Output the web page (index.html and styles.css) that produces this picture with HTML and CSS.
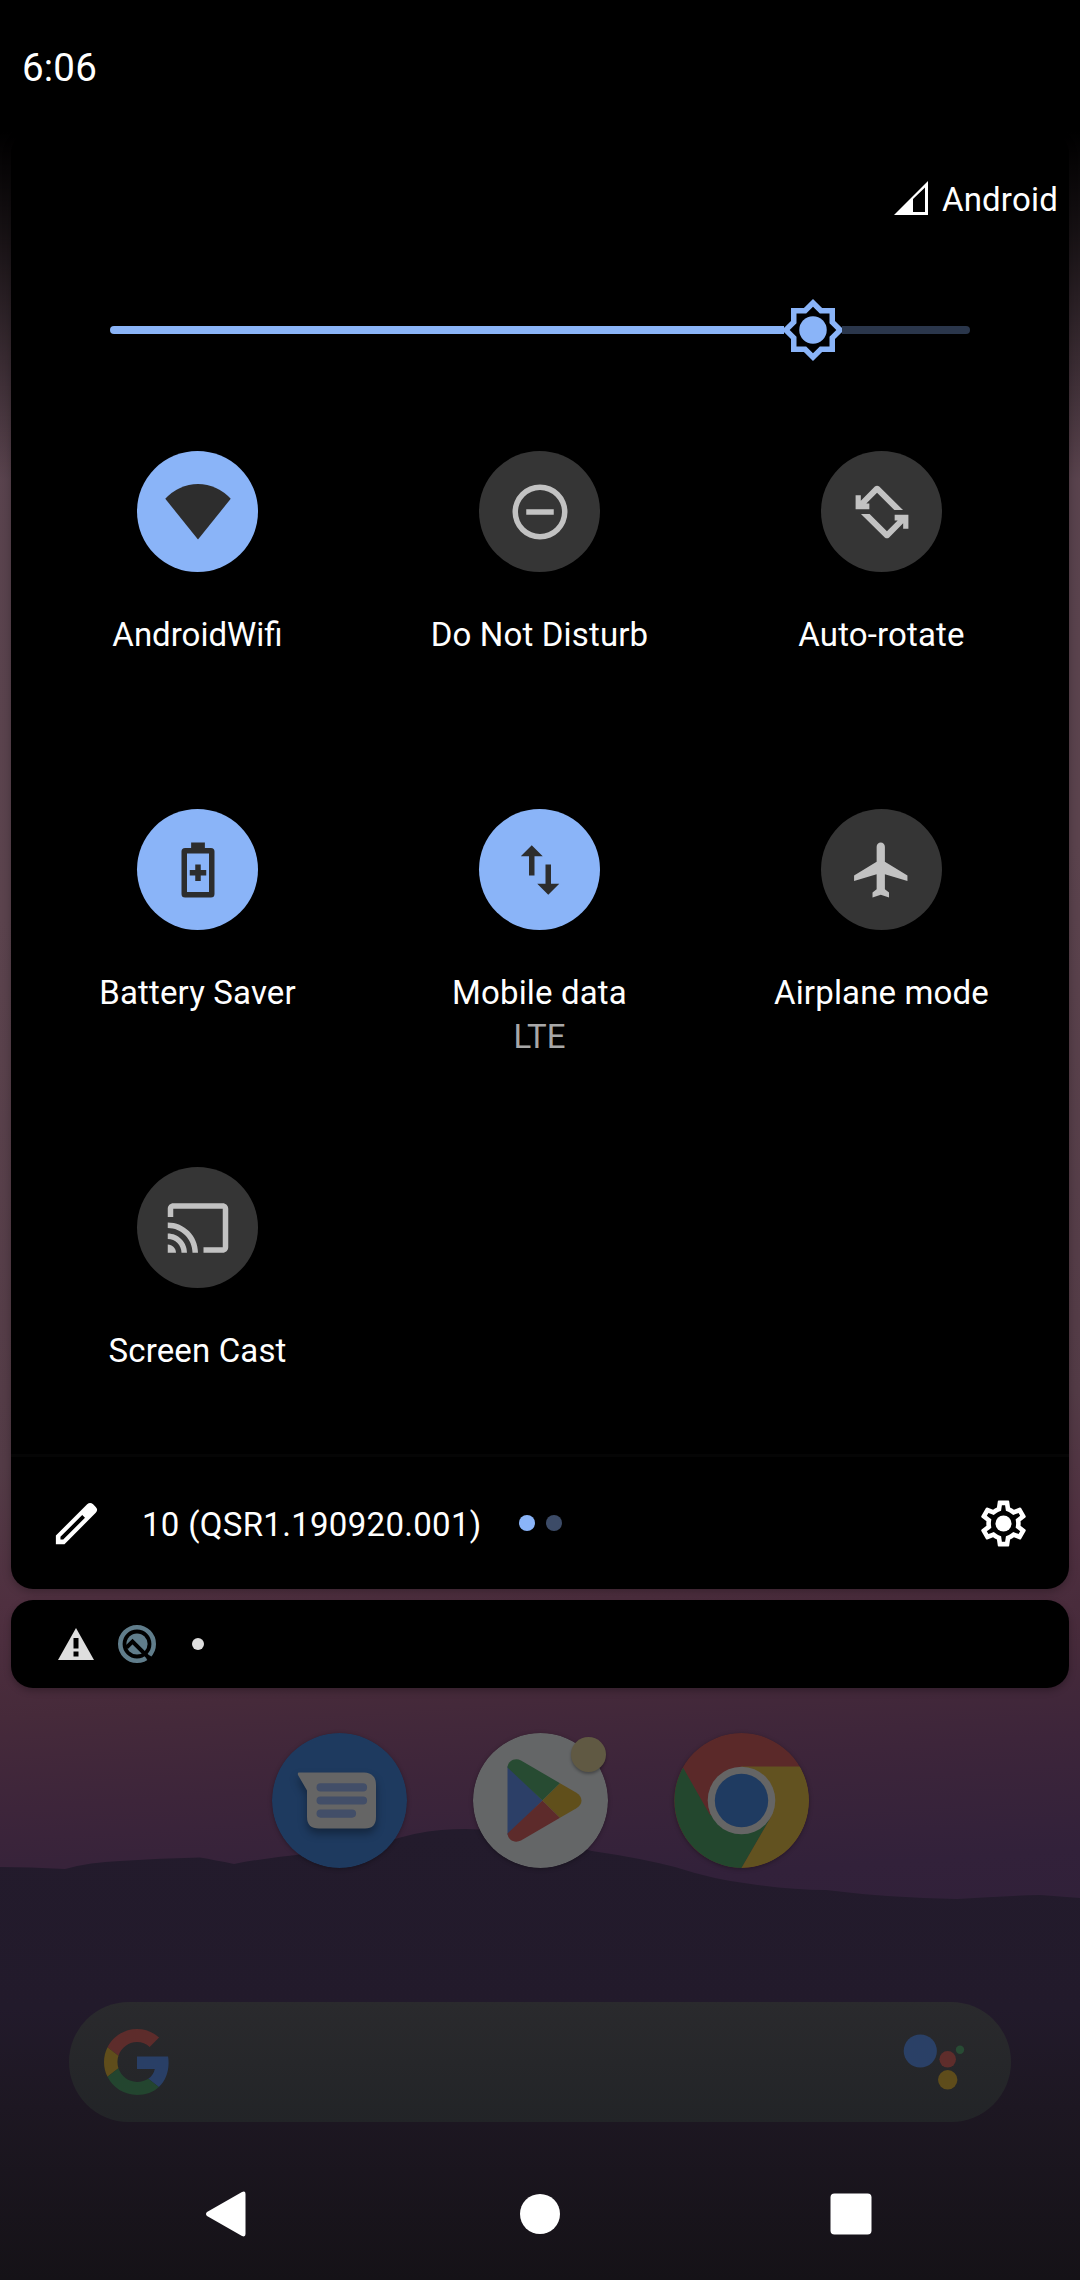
FILE: index.html
```html
<!DOCTYPE html>
<html lang="en">
<head>
<meta charset="utf-8">
<title>Quick settings</title>
<link rel="stylesheet" href="styles.css">
</head>
<body>
<div class="screen">
  <svg class="wallpaper" viewBox="0 0 1080 2280" aria-hidden="true">
    <defs>
      <linearGradient id="sky" x1="0" y1="0" x2="160" y2="2280" gradientUnits="userSpaceOnUse">
        <stop offset="0" stop-color="#56424d"/>
        <stop offset="0.4" stop-color="#5b434d"/>
        <stop offset="0.64" stop-color="#533b46"/>
        <stop offset="0.7" stop-color="#4f3040"/>
        <stop offset="0.75" stop-color="#462a3a"/>
        <stop offset="0.79" stop-color="#3d253a"/>
        <stop offset="0.84" stop-color="#32213a"/>
        <stop offset="1" stop-color="#2a1c34"/>
      </linearGradient>
      <linearGradient id="scrim" x1="0" y1="0" x2="0" y2="480" gradientUnits="userSpaceOnUse">
        <stop offset="0.275" stop-color="#000"/>
        <stop offset="0.48" stop-color="#000" stop-opacity="0.75"/>
        <stop offset="0.72" stop-color="#000" stop-opacity="0.4"/>
        <stop offset="1" stop-color="#000" stop-opacity="0"/>
      </linearGradient>
      <linearGradient id="hill" x1="0" y1="1825" x2="0" y2="2280" gradientUnits="userSpaceOnUse">
        <stop offset="0" stop-color="#231b2c"/>
        <stop offset="0.4" stop-color="#221a2b"/>
        <stop offset="0.62" stop-color="#1d1722"/>
        <stop offset="1" stop-color="#151217"/>
      </linearGradient>
    </defs>
    <rect width="1080" height="2280" fill="url(#sky)"/>
    <rect width="1080" height="480" fill="url(#scrim)"/>
    <path fill="url(#hill)" d="M0 1867Q30 1867 65 1869Q90 1862 120 1861Q160 1858 200 1857.5Q215 1860 234 1864Q265 1858 296 1855Q340 1849 386 1842Q415 1832 441 1830Q490 1826 540 1838L592 1851Q640 1858 675 1867Q715 1880 751 1884Q790 1890 826 1890Q890 1898 957 1899Q1000 1896 1040 1895L1080 1898V2280H0Z"/>
  </svg>

  <header class="status-bar"><time class="clock">6:06</time></header>

  <main class="qs-panel">
    <div class="carrier">
      <svg class="signal" viewBox="0 0 34 34"><path fill-rule="evenodd" fill="#fff" d="M34 0V34H0ZM19 18V31H31V6.500Z"/></svg>
      <span>Android</span>
    </div>

    <div class="brightness">
      <div class="track-on"></div>
      <svg class="thumb" viewBox="0 0 24 24"><path fill="#8ab4f8" fill-rule="evenodd" d="M20 8.690V4h-4.690L12 .690 8.690 4H4v4.690L.690 12 4 15.310V20h4.690L12 23.310 15.310 20H20v-4.690L23.310 12zM18 9.520V6h-3.520L12 3.520 9.520 6H6v3.520L3.520 12 6 14.480V18h3.520L12 20.480 14.480 18H18v-3.520L20.480 12z"/><circle cx="12" cy="12" r="5" fill="#8ab4f8"/></svg>
      <div class="track-off"></div>
    </div>

    <section class="tiles">
      <div class="tile on">
        <div class="disc"><svg viewBox="0 0 24 24"><path d="M.1 7.2A15.9 15.9 0 0 1 23.9 7.2L12.15 21.8Q12 21.95 11.85 21.8Z"/></svg></div>
        <div class="label network">AndroidWifi</div>
      </div>
      <div class="tile">
        <div class="disc"><svg viewBox="0 0 24 24"><path d="M12 2a10 10 0 1 0 0 20a10 10 0 1 0 0-20zM12 4a8 8 0 1 1 0 16a8 8 0 1 1 0-16zM7 11h10v2H7z" fill-rule="evenodd"/></svg></div>
        <div class="label">Do Not Disturb</div>
      </div>
      <div class="tile">
        <div class="disc"><svg viewBox="0 0 24 24"><g id="turn"><path d="M4.3 5.9V7.9L9.4 2.750Q10.2 2.1 11 2.750L19.65 11.3H16.5L10.2 5L6.3 8.9H7.4V11H2.4V5.9Z"/></g><use href="#turn" transform="rotate(180 12 12)"/></svg></div>
        <div class="label">Auto-rotate</div>
      </div>
      <div class="tile on">
        <div class="disc"><svg viewBox="0 0 24 24"><path fill-rule="evenodd" d="M9.5 2h5v2h2.2q1.3 0 1.3 1.3v15.4q0 1.3-1.3 1.3H7.3Q6 22 6 20.7V5.3Q6 4 7.3 4h2.2zM8 6v14h8V6zM11 10h2v2h2v2h-2v2h-2v-2H9v-2h2z"/></svg></div>
        <div class="label">Battery Saver</div>
      </div>
      <div class="tile on">
        <div class="disc"><svg viewBox="0 0 24 24"><path d="M9 3l4 4h-3v7H8V7H5zM15 21l-4-4h3v-7h2v7h3z"/></svg></div>
        <div class="label">Mobile data</div>
        <div class="sub">LTE</div>
      </div>
      <div class="tile">
        <div class="disc"><svg viewBox="0 0 24 24"><path transform="translate(-.45 0)" d="M21.7 16v-2l-8.2-5V3.5C13.5 2.67 12.83 2 12 2s-1.5.67-1.5 1.5V9L2.3 14v2l8.2-2.5V19L9 20.2V22l3-1 3 1v-1.8L13.5 19v-5.5z"/></svg></div>
        <div class="label">Airplane mode</div>
      </div>
      <div class="tile">
        <div class="disc"><svg viewBox="0 0 24 24"><path d="M21 3H3c-1.1 0-2 .9-2 2v3h2V5h18v14h-7v2h7c1.1 0 2-.9 2-2V5c0-1.1-.9-2-2-2zM1 18v3h3c0-1.66-1.34-3-3-3zM1 14v2c2.76 0 5 2.24 5 5h2c0-3.87-3.13-7-7-7zM1 10v2c4.97 0 9 4.03 9 9h2c0-6.08-4.93-11-11-11z"/></svg></div>
        <div class="label">Screen Cast</div>
      </div>
    </section>

    <footer class="qs-footer">
      <svg class="foot-icon" viewBox="0 0 24 24"><path fill="#fff" fill-rule="evenodd" d="M3 17.25V21h3.75L20.4 7.35q1.2-1.3 0-2.6l-1.15-1.15q-1.3-1.2-2.6 0zM5 19v-1.2L14.5 8.3l1.2 1.2L6.2 19z"/></svg>
      <span class="build">10 (QSR1.190920.001)</span>
      <span class="page page-on"></span><span class="page"></span>
      <svg class="foot-icon gear" viewBox="0 0 24 24"><path fill="#fff" fill-rule="evenodd" d="M19.43 12.98c.04-.32.07-.64.07-.98s-.03-.66-.07-.98l2.11-1.65c.19-.15.24-.42.12-.64l-2-3.46c-.09-.16-.26-.25-.44-.25-.06 0-.12.01-.17.03l-2.49 1c-.52-.4-1.08-.73-1.69-.98l-.38-2.65C14.46 2.18 14.25 2 14 2h-4c-.25 0-.46.18-.49.42l-.38 2.65c-.61.25-1.17.59-1.69.98l-2.49-1c-.06-.02-.12-.03-.18-.03-.17 0-.34.09-.43.25l-2 3.46c-.13.22-.07.49.12.64l2.11 1.65c-.04.32-.07.65-.07.98s.03.66.07.98l-2.11 1.65c-.19.15-.24.42-.12.64l2 3.46c.09.16.26.25.44.25.06 0 .12-.01.17-.03l2.49-1c.52.4 1.08.73 1.69.98l.38 2.65c.03.24.24.42.49.42h4c.25 0 .46-.18.49-.42l.38-2.65c.61-.25 1.17-.59 1.69-.98l2.49 1c.06.02.12.03.18.03.17 0 .34-.09.43-.25l2-3.46c.12-.22.07-.49-.12-.64zm-1.98-1.71c.04.31.05.52.05.73 0 .21-.02.43-.05.73l-.14 1.13.89.7 1.08.84-.7 1.21-1.27-.51-1.04-.42-.9.68c-.43.32-.84.56-1.25.73l-1.06.43-.16 1.13-.2 1.35h-1.4l-.19-1.35-.16-1.13-1.06-.43c-.43-.18-.83-.41-1.23-.71l-.91-.7-1.06.43-1.27.51-.7-1.21 1.08-.84.89-.7-.14-1.13c-.03-.31-.05-.54-.05-.74s.02-.43.05-.73l.14-1.13-.89-.7-1.08-.84.7-1.21 1.27.51 1.04.42.9-.68c.43-.32.84-.56 1.25-.73l1.06-.43.16-1.13.2-1.35h1.39l.19 1.35.16 1.13 1.06.43c.43.18.83.41 1.23.71l.91.7 1.06-.43 1.27-.51.7 1.21-1.07.85-.89.7z"/><circle cx="12" cy="12" r="3.5" fill="#fff"/></svg>
    </footer>
  </main>

  <section class="notifications">
    <svg class="warn" viewBox="0 0 36 32"><path fill="#dedede" fill-rule="evenodd" d="M18 0L36 32H0ZM15.5 10v10.500h5V10zM15.5 23.5v5h5v-5z"/></svg>
    <svg class="q-icon" viewBox="0 0 40 40"><circle cx="20" cy="20" r="16.7" fill="none" stroke="#607d8b" stroke-width="4.6"/><circle cx="20" cy="20" r="10.6" fill="#607d8b"/><path d="M9.5 23.5L15.5 17.5L38 40" fill="none" stroke="#000" stroke-width="4"/><path d="M31 33L38 40" stroke="#000" stroke-width="5"/></svg>
    <span class="more"></span>
  </section>

  <section class="dock">
    <svg class="app" viewBox="0 0 135 135">
      <circle cx="67.5" cy="67.5" r="67.5" fill="#1e3a5f"/>
      <g class="bubble"><path fill="#656565" d="M26 39.5H92Q104 40 104 52V84Q104 95.5 93 95.5H47Q35 95.5 35 84V57.5L26 42Q25.3 39.5 27 39.5Z"/></g>
      <path stroke="#424e68" stroke-width="8.2" stroke-linecap="round" d="M48.6 54.4H91M48.6 67.5H91M48.6 80.6H80"/>
    </svg>
    <svg class="app" viewBox="0 0 135 135">
      <circle cx="67.5" cy="67.5" r="67.5" fill="#646667"/>
      <path fill="#2c3f67" d="M34.5 33V102L69.5 67.5Z"/>
      <path fill="#274b32" d="M34.5 34.5C35 27.5 42 24.5 48 27.5L87 50.2L69.5 67.5Z"/>
      <path fill="#5d2b2b" d="M34.5 100.5C35 107.5 42 110.5 48 107.5L87 84.8L69.5 67.5Z"/>
      <path fill="#604f1b" d="M87 50.2L103 59.5Q108.5 63 108.5 67.5T103 75.5L87 84.8L69.5 67.5Z"/>
    </svg>
    <svg class="app" viewBox="0 0 135 135">
      <circle cx="67.5" cy="67.5" r="67.5" fill="#5b2929"/>
      <path fill="#23472e" d="M9 34.5A67.5 67.5 0 0 0 67.5 135L96.5 85L67.5 67.5L36 82Z"/>
      <path fill="#625220" d="M67.5 33.5H126A67.5 67.5 0 0 1 67.5 135L96.7 84.5Z"/>
      <circle cx="67.5" cy="67.5" r="33.8" fill="#656565"/>
      <circle cx="67.5" cy="67.5" r="26.7" fill="#1f3b61"/>
    </svg>
    <span class="badge"></span>
  </section>

  <section class="search">
    <svg class="g-logo" viewBox="0 0 48 48">
      <path fill="#5d2c2b" d="M24 9.5c3.54 0 6.71 1.22 9.21 3.6l6.85-6.85C35.9 2.38 30.47 0 24 0 14.62 0 6.51 5.38 2.56 13.22l7.98 6.19C12.43 13.72 17.74 9.5 24 9.5z"/>
      <path fill="#293f66" d="M46.98 24.55c0-1.57-.15-3.09-.38-4.55H24v9.02h12.94c-.58 2.96-2.26 5.48-4.78 7.18l7.73 6c4.51-4.18 7.09-10.36 7.09-17.65z"/>
      <path fill="#5f4d1b" d="M10.53 28.59c-.48-1.45-.76-2.99-.76-4.59s.27-3.14.76-4.59l-7.98-6.19C.92 16.46 0 20.12 0 24c0 3.88.92 7.54 2.56 10.78l7.97-6.19z"/>
      <path fill="#23452f" d="M24 48c6.48 0 11.93-2.13 15.89-5.81l-7.73-6c-2.15 1.45-4.92 2.3-8.16 2.3-6.26 0-11.57-4.22-13.47-9.91l-7.98 6.19C6.51 42.62 14.62 48 24 48z"/>
    </svg>
    <svg class="assistant" viewBox="0 0 62 56"><circle cx="17.3" cy="17" r="16.6" fill="#2a4066"/><circle cx="44.7" cy="25.3" r="8.3" fill="#5e2d2b"/><circle cx="44.7" cy="45.8" r="9.7" fill="#5e4c1b"/><circle cx="57" cy="15.7" r="4.2" fill="#284b34"/></svg>
  </section>

  <nav class="nav-bar">
    <svg viewBox="0 0 66 66"><path fill="#fff" d="M13 31L48 11Q51.5 9.5 51.5 13V53Q51.5 56.5 48 55L13 35Q11 33 13 31Z"/></svg>
    <svg viewBox="0 0 66 66"><circle cx="33" cy="33" r="20" fill="#fff"/></svg>
    <svg viewBox="0 0 66 66"><rect x="10.5" y="12.5" width="41" height="41" rx="4" fill="#fff"/></svg>
  </nav>
</div>
</body>
</html>
```

FILE: styles.css
```css
* { box-sizing: border-box; }
body { margin: 0; background: #000; font-family: Roboto, sans-serif; color: #fff; }
svg { display: block; flex: none; }

.screen { position: relative; width: 1080px; height: 2280px; overflow: hidden; display: flex; flex-direction: column; }
.wallpaper { position: absolute; inset: 0; width: 1080px; height: 2280px; z-index: -1; }

.status-bar { height: 132px; padding: 45px 22px 0; }
.clock { display: block; font-size: 38.5px; line-height: 46px; letter-spacing: 0.2px; }

.qs-panel { height: 1457px; margin: 0 11px; background: #000; border-radius: 22px; box-shadow: 0 3px 9px rgba(0, 0, 0, 0.25); display: flex; flex-direction: column; }
.carrier { height: 138px; padding: 46px 11px 0 0; display: flex; justify-content: flex-end; gap: 14px; font-size: 33px; line-height: 44px; letter-spacing: 0.2px; }
.signal { width: 34px; height: 34px; margin-top: 3px; }

.brightness { height: 120px; padding: 0 99px; display: flex; align-items: center; }
.track-on { width: 674px; height: 8px; background: #8ab4f8; border-radius: 4px 0 0 4px; }
.thumb { width: 66px; height: 66px; margin: 0 -4px; }
.track-off { flex: 1; height: 8px; background: #2a364b; border-radius: 0 4px 4px 0; }

.tiles { height: 1064px; padding: 61px 15.5px 0; display: grid; grid-template-columns: repeat(3, 342px); grid-auto-rows: 358px; flex: none; }
.tile { display: flex; flex-direction: column; align-items: center; font-size: 33px; line-height: 44px; white-space: nowrap; }
.disc { width: 121px; height: 121px; padding: 28px 27px 27px 28px; border-radius: 50%; background: #353535; margin-bottom: 41px; }
.disc svg { width: 66px; height: 66px; fill: #c2c2c2; }
.tile.on .disc { background: #8ab4f8; }
.tile.on .disc svg { fill: #2d2d2d; }
.label { letter-spacing: 0.15px; }
.label.network { letter-spacing: normal; }
.sub { color: #a8a8a8; }

.qs-footer { flex: 1; border-top: 3px solid #050505; padding: 0 38px; display: flex; align-items: center; }
.foot-icon { width: 55px; height: 55px; }
.build { margin: 4px 37px 0 38px; font-size: 33px; line-height: 44px; letter-spacing: 0.3px; white-space: nowrap; }
.page { width: 16px; height: 16px; border-radius: 50%; background: #3c4b67; margin-right: 11px; }
.page-on { background: #8ab4f8; }
.gear { margin-left: auto; }

.notifications { height: 88px; margin: 11px 11px 0; padding-left: 47px; background: #000; border-radius: 22px; box-shadow: 0 3px 7px rgba(0, 0, 0, 0.25); display: flex; align-items: center; }
.warn { width: 36px; height: 32px; }
.q-icon { width: 40px; height: 40px; margin: 0 35px 0 23px; }
.more { width: 12px; height: 12px; border-radius: 50%; background: #dedede; }

.dock { position: relative; margin-top: 44.5px; display: flex; justify-content: center; gap: 66px; }
.app { width: 135px; height: 135px; border-radius: 50%; filter: drop-shadow(0 1px 2px rgba(0, 0, 0, 0.3)); }
.bubble { filter: drop-shadow(0 5px 4px rgba(0, 0, 0, 0.35)); }
.badge { position: absolute; left: 571px; top: 4.5px; width: 35px; height: 35px; border-radius: 50%; background: #605943; box-shadow: 0 2px 3px rgba(0, 0, 0, 0.3); }

.search { margin: 134.5px 69px 0; height: 120px; border-radius: 60px; background: linear-gradient(#2a2a2d, #222427); padding: 0 46px 0 35px; display: flex; justify-content: space-between; align-items: center; }
.g-logo { width: 66px; height: 66px; }
.assistant { width: 62px; height: 56px; }

.nav-bar { margin-top: 59px; padding: 0 194px; height: 66px; display: flex; justify-content: space-between; }
.nav-bar svg { width: 66px; height: 66px; }
```
